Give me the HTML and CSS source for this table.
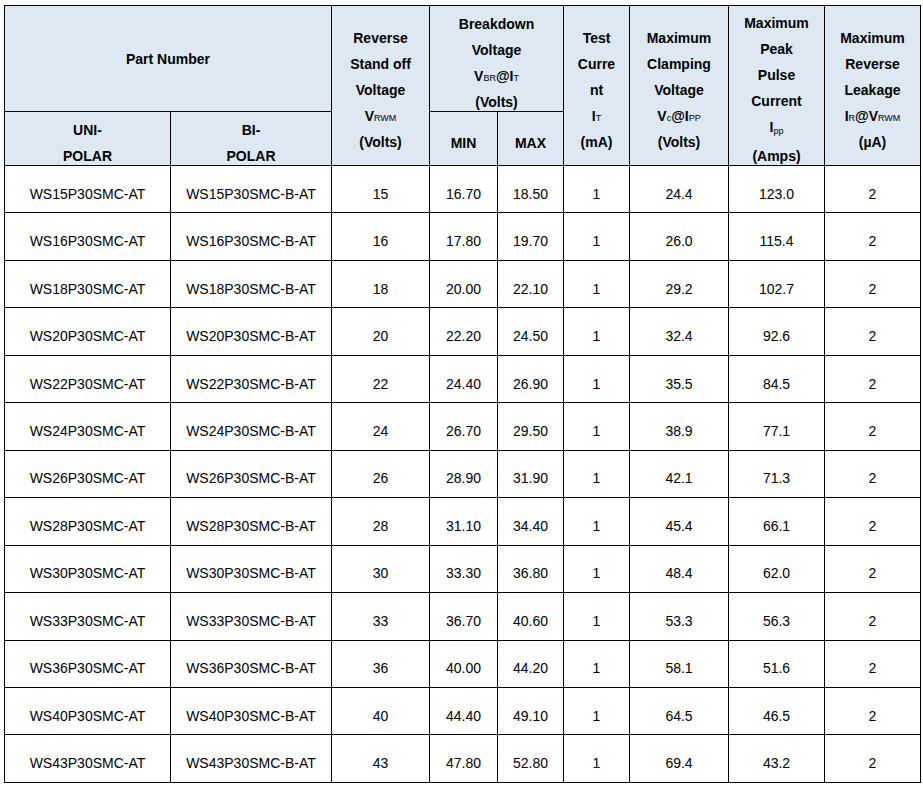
FILE: index.html
```html
<!DOCTYPE html>
<html>
<head>
<meta charset="utf-8">
<link rel="stylesheet" href="styles.css">
</head>
<body>
<div class="wrap">
<table class="spec">
<colgroup>
<col class="c-uni"><col class="c-bi"><col class="c-rev"><col class="c-min"><col class="c-max"><col class="c-test"><col class="c-clamp"><col class="c-peak"><col class="c-leak">
</colgroup>
<thead>
<tr class="h1">
<th colspan="2" class="pn">Part Number</th>
<th rowspan="2"><div class="hc">Reverse<br>Stand off<br>Voltage<br>V<span class="sub">RWM</span><br>(Volts)</div></th>
<th colspan="2"><div class="hc">Breakdown<br>Voltage<br>V<span class="sub">BR</span>@I<span class="sub">T</span><br>(Volts)</div></th>
<th rowspan="2"><div class="hc">Test<br>Curre<br>nt<br>I<span class="sub">T</span><br>(mA)</div></th>
<th rowspan="2"><div class="hc">Maximum<br>Clamping<br>Voltage<br>V<span class="sub">c</span>@I<span class="sub">PP</span><br>(Volts)</div></th>
<th rowspan="2"><div class="hc">Maximum<br>Peak<br>Pulse<br>Current<br>I<span class="sub low">pp</span><br>(Amps)</div></th>
<th rowspan="2"><div class="hc">Maximum<br>Reverse<br>Leakage<br>I<span class="sub">R</span>@V<span class="sub">RWM</span><br>(µA)</div></th>
</tr>
<tr class="h2">
<th><div class="hc">UNI-<br>POLAR</div></th>
<th><div class="hc">BI-<br>POLAR</div></th>
<th><div class="hc">MIN</div></th>
<th><div class="hc">MAX</div></th>
</tr>
</thead>
<tbody>
<tr><td>WS15P30SMC-AT</td><td>WS15P30SMC-B-AT</td><td>15</td><td>16.70</td><td>18.50</td><td>1</td><td>24.4</td><td>123.0</td><td>2</td></tr>
<tr><td>WS16P30SMC-AT</td><td>WS16P30SMC-B-AT</td><td>16</td><td>17.80</td><td>19.70</td><td>1</td><td>26.0</td><td>115.4</td><td>2</td></tr>
<tr><td>WS18P30SMC-AT</td><td>WS18P30SMC-B-AT</td><td>18</td><td>20.00</td><td>22.10</td><td>1</td><td>29.2</td><td>102.7</td><td>2</td></tr>
<tr><td>WS20P30SMC-AT</td><td>WS20P30SMC-B-AT</td><td>20</td><td>22.20</td><td>24.50</td><td>1</td><td>32.4</td><td>92.6</td><td>2</td></tr>
<tr><td>WS22P30SMC-AT</td><td>WS22P30SMC-B-AT</td><td>22</td><td>24.40</td><td>26.90</td><td>1</td><td>35.5</td><td>84.5</td><td>2</td></tr>
<tr><td>WS24P30SMC-AT</td><td>WS24P30SMC-B-AT</td><td>24</td><td>26.70</td><td>29.50</td><td>1</td><td>38.9</td><td>77.1</td><td>2</td></tr>
<tr><td>WS26P30SMC-AT</td><td>WS26P30SMC-B-AT</td><td>26</td><td>28.90</td><td>31.90</td><td>1</td><td>42.1</td><td>71.3</td><td>2</td></tr>
<tr><td>WS28P30SMC-AT</td><td>WS28P30SMC-B-AT</td><td>28</td><td>31.10</td><td>34.40</td><td>1</td><td>45.4</td><td>66.1</td><td>2</td></tr>
<tr><td>WS30P30SMC-AT</td><td>WS30P30SMC-B-AT</td><td>30</td><td>33.30</td><td>36.80</td><td>1</td><td>48.4</td><td>62.0</td><td>2</td></tr>
<tr><td>WS33P30SMC-AT</td><td>WS33P30SMC-B-AT</td><td>33</td><td>36.70</td><td>40.60</td><td>1</td><td>53.3</td><td>56.3</td><td>2</td></tr>
<tr><td>WS36P30SMC-AT</td><td>WS36P30SMC-B-AT</td><td>36</td><td>40.00</td><td>44.20</td><td>1</td><td>58.1</td><td>51.6</td><td>2</td></tr>
<tr><td>WS40P30SMC-AT</td><td>WS40P30SMC-B-AT</td><td>40</td><td>44.40</td><td>49.10</td><td>1</td><td>64.5</td><td>46.5</td><td>2</td></tr>
<tr><td>WS43P30SMC-AT</td><td>WS43P30SMC-B-AT</td><td>43</td><td>47.80</td><td>52.80</td><td>1</td><td>69.4</td><td>43.2</td><td>2</td></tr>
</tbody>
</table>
</div>
</body>
</html>
```
FILE: styles.css
```css
html, body {
  margin: 0;
  padding: 0;
  background: #ffffff;
}
.wrap {
  padding: 5px 0 0 4px;
}
.spec {
  border-collapse: collapse;
  table-layout: fixed;
  width: 916px;
  font-family: "Liberation Sans", Arial, sans-serif;
  font-size: 14px;
  color: #000;
}
.c-uni { width: 166px; }
.c-bi { width: 161px; }
.c-rev { width: 98px; }
.c-min { width: 68px; }
.c-max { width: 66px; }
.c-test { width: 66px; }
.c-clamp { width: 99px; }
.c-peak { width: 96px; }
.c-leak { width: 96px; }
.spec th, .spec td {
  border: 1px solid #000;
  text-align: center;
  vertical-align: middle;
  padding: 0;
  box-sizing: border-box;
}
.spec th {
  background: #dde8f3;
  font-weight: bold;
  line-height: 26px;
}
.hc {
  margin: 4px 0 -4px;
}
.h1 { height: 106px; }
.h2 { height: 54px; }
.spec tbody tr { height: 47.46px; }
.spec td {
  padding-top: 9px;
  line-height: 20px;
}
.sub {
  font-size: 9px;
  font-weight: normal;
  line-height: 22px;
}
.sub.low {
  vertical-align: -2px;
  line-height: 24px;
}
```
